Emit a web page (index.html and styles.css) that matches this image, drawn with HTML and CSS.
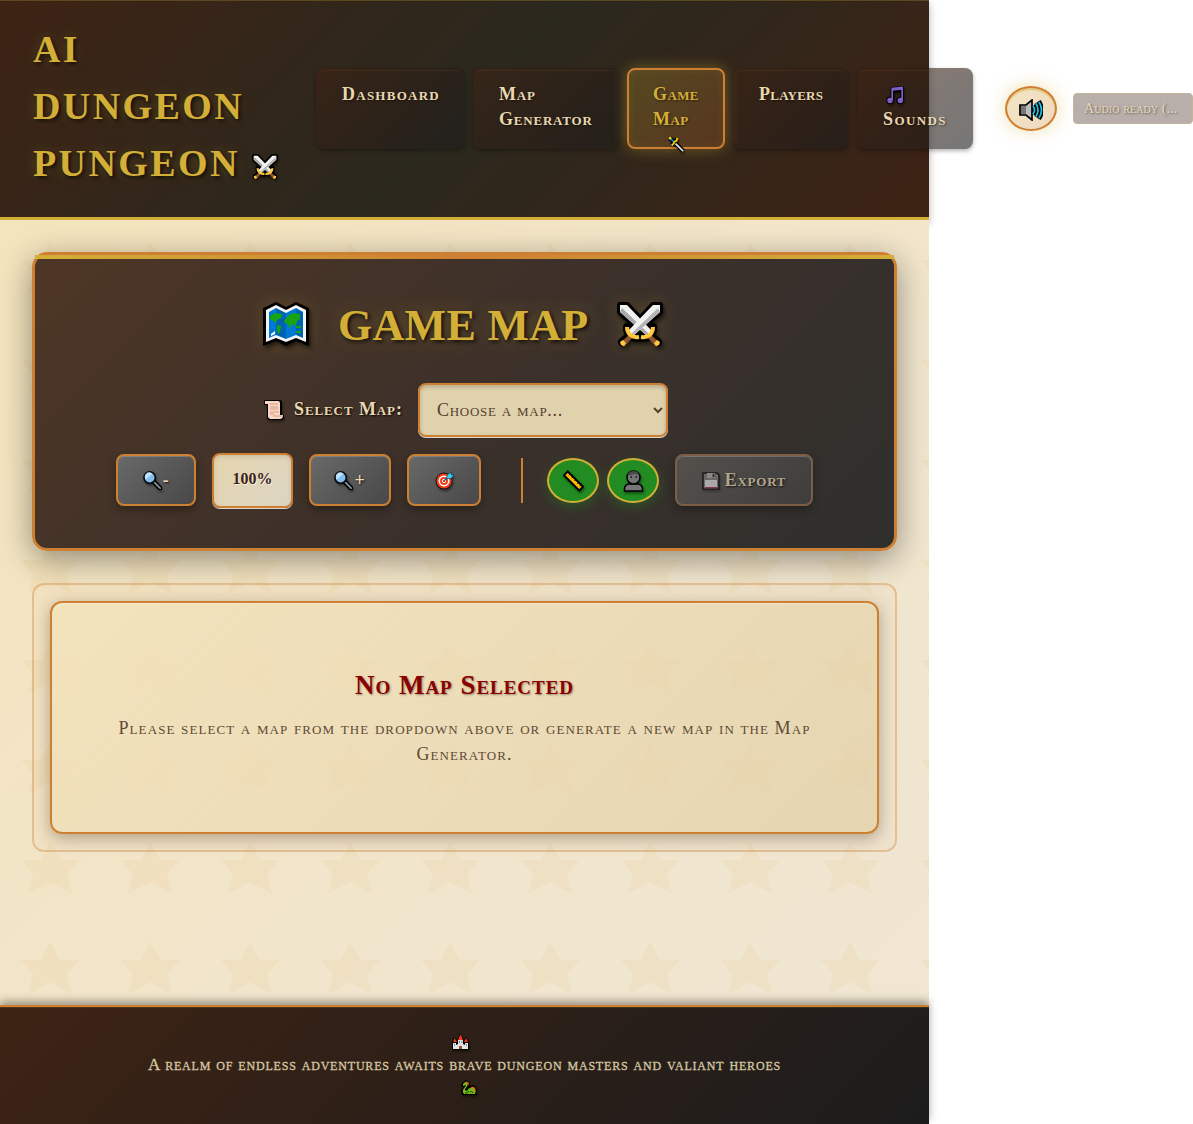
FILE: index.html
```html
<!DOCTYPE html>
<html lang="en">
<head>
<meta charset="utf-8">
<title>AI Dungeon Pungeon</title>
<link rel="stylesheet" href="styles.css">
</head>
<body>
<svg class="sprite" aria-hidden="true">
  <symbol id="swords" viewBox="0 0 46 46">
    <g stroke="#000" stroke-linejoin="round" stroke-width="6"><path d="M3 3h7l26 28-5 5L3 10zM43 3h-7L10 31l5 5 28-26z"/><path d="M10 25c0 8 4 11 11 11M36 25c0 8-4 11-11 11M5 40l8-7M41 40l-8-7" fill="none" stroke-width="8" stroke-linecap="round"/></g>
    <path d="M3 41l10-9 3 3-9 10zM43 41l-10-9-3 3 9 10z" fill="#8e562e"/>
    <path d="M3 3h7l25 26-5 5L3 10z" fill="#f2f2f2"/><path d="M3 10l2-4 27 26-2 2z" fill="#aaa"/>
    <path d="M43 3h-7L11 29l5 5 27-24z" fill="#f2f2f2"/><path d="M43 10l-2-4-27 26 2 2z" fill="#b5b5b5"/>
    <path d="M10 25c0 7 5 11 12 10M36 25c0 7-5 11-12 10" fill="none" stroke="#ffc83d" stroke-width="4"/>
    <path d="M3 40l3-2 3 3-2 3-3-1zM43 40l-3-2-3 3 2 3 3-1z" fill="#ffc83d"/>
  </symbol>
  <symbol id="worldmap" viewBox="0 0 46 46">
    <path d="M0 6L13 0l10 5L33 0l13 6v38l-13-5-10 5-10-5-13 5z"/>
    <path d="M3 8l10-5 10 5 10-5 10 5v32l-10-4-10 4-10-4-10 4z" fill="#f4f4f4"/>
    <path d="M6 10l7-4v27l-7 3zM23 11l10-5v27l-10 4z" fill="#0078d7"/><path d="M13 6l10 5v26l-10-4zM33 6l7 4v26l-7-3z" fill="#0063b1"/>
    <path d="M7 14l5-3 7 1-1 4-4 2-1 3-4-3-2-1zM14 23l4 1-1 6-2 2-1-5zM21 19l3-4 5-4 8 1v5l-3 2-1 5-4-2-2 5-2-5-3-1zM33 24h5v2h-5zM33 29h5v2h-5z" fill="#16a510"/>
    <path d="M8 32l4-3v3l-4 2z" fill="#fff"/>
  </symbol>
  <symbol id="scroll" viewBox="0 0 20 20"><path d="M0 1q0-1 2-1h14q2 0 2 2v13h2v3q-1 2-3 2H6q-3 0-3-3V5H1Q0 5 0 3z"/><path d="M1 1h13q2 0 2 2v12h3q0 4-3 4H7q-3 0-3-3V4H1z" fill="#f9d6c4"/><path d="M6 4h8M6 7h8M6 9h8M6 12h9M6 14h4M9 16h9" stroke="#d59c82"/></symbol>
  <symbol id="lens" viewBox="0 0 20 20"><path d="M11 11l7 7" stroke="#000" stroke-width="5" stroke-linecap="round"/><path d="M12 12l6 6" stroke="#83939a" stroke-width="2" stroke-linecap="round"/><circle cx="7" cy="7" r="6" fill="#83beec" stroke="#0b0b0b" stroke-width="1.8"/><path d="M3 9a4.5 4.5 0 0 1 7-6z" fill="#bfe1ff"/></symbol>
  <symbol id="target" viewBox="0 0 20 20"><circle cx="9.5" cy="10.5" r="9" fill="#111"/><circle cx="9.500" cy="10.500" r="8" fill="#f03a17"/><circle cx="9.500" cy="10.500" r="5" fill="none" stroke="#fff" stroke-width="1.600"/><circle cx="9.500" cy="10.500" r="1.800" fill="none" stroke="#fff"/><path d="M10 10l6-6" stroke="#0063b1" stroke-width="1.500"/><path d="M12 8l1-4 4-3v3h3l-3 4z" fill="#31d2f7" stroke="#123" stroke-width=".6"/></symbol>
  <symbol id="ruler" viewBox="0 0 22 22"><path d="M1 5l4-4 16 16-4 4z" fill="#ffb900" stroke="#000" stroke-width="2"/><path d="M7 4L6 5M10 7L9 8M13 10l-1 1M16 13l-1 1M18.500 15.500L17.500 16.500" stroke="#000"/></symbol>
  <symbol id="person" viewBox="0 0 20 22"><path d="M1 21v-3q1-4 5-4h8q4 0 5 4v3z" fill="#767676" stroke="#000" stroke-width="1.500"/><circle cx="10" cy="7.500" r="6.500" fill="#767676" stroke="#000" stroke-width="1.500"/><path d="M4 6q1-5 6-5 5 0 6 5l-4-2z" fill="#4c4c4c"/><path d="M7 7h1.500M12 7h1.500" stroke="#111" stroke-width="1.500"/></symbol>
  <symbol id="floppy" viewBox="0 0 18 18"><path d="M1 1h14l2 2v14H1z" fill="#777" stroke="#000" stroke-width="1.500"/><path d="M5 1h8v5H5z" fill="#aaa"/><path d="M11 2h1v3h-1z" stroke="#222"/><path d="M3 8h12v8H3z" fill="#ddd"/><path d="M3 15h12v1.500H3z" fill="#a4265c"/></symbol>
  <symbol id="note" viewBox="0 0 18 18"><g stroke="#000" stroke-width="2.500" fill="none"><path d="M6.500 14V3L16 2v12M6.500 5L16 4" stroke-width="4"/><circle cx="4" cy="14.500" r="2.500"/><circle cx="14" cy="14.500" r="2.500"/></g><path d="M6.200 14V2.500L16.200 1.500V14M6.200 4L16.200 3" stroke="#7c60c8" stroke-width="1.700" fill="none"/><g fill="#7c60c8"><circle cx="4" cy="14.500" r="2.700"/><circle cx="14.300" cy="14.500" r="2.700"/></g></symbol>
  <symbol id="speaker" viewBox="0 0 24 22"><path d="M1 6h6l6-5v20l-6-5H1z" fill="#bbb" stroke="#000" stroke-width="1.700"/><path d="M2 7h5v8H2z" fill="#777"/><path d="M14 7q3 4 0 8M17 4q4 7 0 14M20 2q6 9 0 18" fill="none" stroke="#000" stroke-width="4"/><path d="M14 7q3 4 0 8M17 4.500q4 6.500 0 13M20 3q5 8 0 16" fill="none" stroke="#1cc4e8" stroke-width="1.700"/></symbol>
  <symbol id="dagger" viewBox="0 0 18 18"><path d="M2 2l14 14M4 9l6-6" stroke="#000" stroke-width="4.500"/><path d="M8 8l8 8" stroke="#ddd" stroke-width="2"/><path d="M1.500 1.500l2 2" stroke="#ffe000" stroke-width="2.500"/><path d="M3 3l4 4" stroke="#0078d7" stroke-width="2"/><path d="M4 10l2-2 1-2 2-1 1-3" fill="none" stroke="#f5d400" stroke-width="2"/></symbol>
  <symbol id="castle" viewBox="0 0 17 17"><path d="M0 17V9l2-5 3 3 3-7 4 7 2-3 3 5v8z"/><path d="M1 10h3v2l2-1h5l2 1v-2h3v6H1z" fill="#e6e6e6"/><path d="M6 7h5v5H6z" fill="#ddd"/><path d="M1 9l1.500-4L5 9zM6 7l2.500-6L11 7zM12 9l2-4 2 4z" fill="#f03a17"/><path d="M7 13h3v3H7z" fill="#8e562e"/><path d="M7 9h1M9.500 9h1M2 12h1M14 12h1" stroke="#333"/></symbol>
  <symbol id="dragon" viewBox="0 0 16 16"><path d="M1 3l4-3 4 3v3l4-1 3 4-1 6H1L0 10l3-3-3-1z"/><path d="M9 9q1-3 4-2 3 3 1 6z" fill="#f7630c"/><path d="M2 4q3-4 5 0-1 3-3 5 0 2 2 2 2-4 6-3 3 2 2 6H3q-3-3 1-7l1-2-3 1z" fill="#74b818"/><path d="M5 1l3 2-1 3z" fill="#f7630c"/><path d="M4 13q3 1 4-2M9 12q2-2 3 1" stroke="#174a08" fill="none"/></symbol>
</svg>

<div class="page">
  <header class="header">
    <h1 class="brand">AI DUNGEON PUNGEON <svg class="brand-icon"><use href="#swords"/></svg></h1>
    <nav class="nav">
      <a class="nav-item dash">Dashboard</a>
      <a class="nav-item gen">Map Generator</a>
      <a class="nav-item game active">Game Map<svg class="nav-dagger"><use href="#dagger"/></svg></a>
      <a class="nav-item players">Players</a>
      <a class="nav-item sounds"><svg class="nav-note"><use href="#note"/></svg>Sounds</a>
    </nav>
    <div class="audio">
      <button class="audio-button"><svg><use href="#speaker"/></svg></button>
      <div class="audio-status">Audio ready (...</div>
    </div>
  </header>

  <main class="main">
    <section class="panel">
      <h2 class="title"><svg><use href="#worldmap"/></svg><span class="title-text">GAME MAP</span><svg><use href="#swords"/></svg></h2>
      <div class="picker">
        <label class="picker-label" for="map"><svg><use href="#scroll"/></svg>Select Map:</label>
        <select class="picker-select" id="map"><option>Choose a map...</option></select>
      </div>
      <div class="controls">
        <button class="btn zoom-out"><svg><use href="#lens"/></svg><span>-</span></button>
        <output class="zoom-level">100%</output>
        <button class="btn zoom-in"><svg><use href="#lens"/></svg><span>+</span></button>
        <button class="btn reset"><svg><use href="#target"/></svg></button>
        <div class="tools">
          <button class="tool"><svg><use href="#ruler"/></svg></button>
          <button class="tool"><svg><use href="#person"/></svg></button>
        </div>
        <button class="btn export" disabled><svg><use href="#floppy"/></svg><span>Export</span></button>
      </div>
    </section>
    <section class="stage">
      <div class="empty">
        <h3 class="empty-title">No Map Selected</h3>
        <p class="empty-text">Please select a map from the dropdown above or generate a new map in the Map Generator.</p>
      </div>
    </section>
  </main>

  <footer class="footer">
    <svg class="castle"><use href="#castle"/></svg>
    <p class="footer-text">A realm of endless adventures awaits brave dungeon masters and valiant heroes</p>
    <svg class="dragon"><use href="#dragon"/></svg>
  </footer>
</div>
</body>
</html>
```
FILE: styles.css
```css
:root {
  --gold: #d4af37;
  --bronze: #cd7f32;
  --cream: #e9d8b0;
}
* { box-sizing: border-box; }
body { margin: 0; background: #fff; }
.page {
  width: 929px;
  height: 1124px;
  display: flex;
  flex-direction: column;
  font-family: "Liberation Serif", "Times New Roman", serif;
  font-size: 18px;
  font-variant-caps: small-caps;
}
.sprite { position: absolute; width: 0; height: 0; }
svg { flex: none; filter: drop-shadow(1px 2px 1px rgba(0, 0, 0, .4)); }
button, select, output { font: inherit; letter-spacing: inherit; }

.header {
  height: 220px;
  padding: 0 0 0 32px;
  display: flex;
  align-items: center;
  border-bottom: 3px solid var(--gold);
  background: linear-gradient(135deg, #3d2314 0%, #2b281e 50%, #3d2314 100%);
  box-shadow: 0 4px 8px rgba(0, 0, 0, .3), inset 0 1px 0 rgba(212, 175, 55, .25);
}
.brand {
  flex: none;
  width: 256px;
  margin: 0 28px 5px 0;
  padding-left: 1px;
  font-size: 38px;
  line-height: 57px;
  letter-spacing: 2.4px;
  color: var(--gold);
  text-shadow: 2px 2px 4px rgba(0, 0, 0, .8), 0 0 12px rgba(212, 175, 55, .25);
}
.brand-icon { width: 26px; height: 26px; vertical-align: -4px; }
.nav { display: flex; flex: none; gap: 8px; }
.nav-item {
  height: 81px;
  padding: 12px 24px;
  border: 2px solid transparent;
  border-radius: 8px;
  font-weight: bold;
  line-height: 25px;
  letter-spacing: .8px;
  color: var(--cream);
  background: linear-gradient(135deg, rgba(61, 35, 20, .6), rgba(28, 28, 28, .6)) border-box;
  box-shadow: 0 2px 4px rgba(0, 0, 0, .3), inset 0 1px 0 rgba(205, 127, 50, .1);
  text-shadow: 1px 1px 2px rgba(0, 0, 0, .5);
}
.dash { width: 149px; letter-spacing: 1.25px; }
.gen { width: 146px; }
.game { width: 98px; letter-spacing: .4px; }
.players { width: 116px; letter-spacing: .24px; }
.sounds { width: 116px; letter-spacing: 1.4px; }
.active {
  position: relative;
  color: var(--gold);
  border-color: var(--bronze);
  background: linear-gradient(135deg, #554820, #573620);
  box-shadow: 0 0 15px rgba(212, 175, 55, .4), inset 0 0 10px rgba(212, 175, 55, .1);
}
.nav-dagger { position: absolute; left: 39px; top: 66px; width: 17px; height: 17px; }
.nav-note { display: block; width: 18px; height: 18px; margin: 4px 0 3px 3px; }
.audio { display: flex; flex: none; align-items: center; gap: 16px; margin-left: 32px; }
.audio-button {
  width: 52px;
  height: 45px;
  padding: 2px 0 0;
  border: 2px solid var(--bronze);
  border-radius: 50%;
  display: grid;
  place-items: center;
  background: linear-gradient(135deg, #f3e5c4, #efd9c0);
  box-shadow: 0 0 15px rgba(212, 175, 55, .35), 0 0 30px rgba(212, 175, 55, .08), inset 0 2px 1px rgba(212, 175, 55, .5);
}
.audio-button svg { width: 24px; height: 22px; filter: none; }
.audio-status {
  width: 120px;
  height: 31px;
  padding-left: 10px;
  border: 1px solid #c3b49b;
  border-radius: 4px;
  line-height: 29px;
  font-size: 14px;
  letter-spacing: .1px;
  white-space: nowrap;
  color: #e8dabb;
  background: #b9afaa;
  text-shadow: 1px 1px 2px rgba(0, 0, 0, .5);
}

.main {
  flex: 1;
  padding: 32px;
  background: url("data:image/svg+xml,%3Csvg xmlns='http://www.w3.org/2000/svg' width='100' height='100'%3E%3Cpath d='M50 41L60 60H80L67 74L72 94L50 82L28 94L33 74L21 60H41Z' fill='%23dca03c' fill-opacity='.07'/%3E%3C/svg%3E") 0 -220px, linear-gradient(135deg, #f4e4bc, #f1e5cc 60%, #f0e6d2);
}
.panel {
  position: relative;
  height: 299px;
  padding-top: 40px;
  border: 3px solid var(--bronze);
  border-radius: 15px;
  background: linear-gradient(135deg, #4e3625 0%, #3b302a 55%, #2f2f2d 100%);
  box-shadow: 0 8px 32px rgba(0, 0, 0, .4);
}
.panel::before {
  content: "";
  position: absolute;
  inset: 0 0 auto;
  height: 4px;
  background: linear-gradient(90deg, var(--gold), var(--bronze), var(--gold));
}
.title {
  height: 60px;
  margin: 0;
  padding-right: 3px;
  display: flex;
  align-items: center;
  justify-content: center;
  font-size: 44px;
  letter-spacing: .3px;
  color: var(--gold);
  text-shadow: 2px 2px 4px rgba(0, 0, 0, .8), 0 0 20px rgba(212, 175, 55, .3);
}
.title svg { width: 46px; height: 46px; filter: drop-shadow(2px 3px 2px rgba(0, 0, 0, .6)) drop-shadow(0 0 8px rgba(212, 175, 55, .2)); }
.title-text { width: 250px; margin: 0 29px; white-space: nowrap; }
.picker { height: 55px; margin-top: 27px; padding-left: 3px; display: flex; justify-content: center; align-items: center; }
.picker-label {
  width: 154px;
  display: flex;
  align-items: center;
  gap: 10px;
  font-weight: bold;
  letter-spacing: .9px;
  white-space: nowrap;
  color: var(--cream);
  text-shadow: 1px 1px 2px #000;
}
.picker-label svg { width: 20px; height: 20px; }
.picker-select {
  width: 250px;
  height: 54px;
  padding: 0 0 0 13px;
  border: 2px solid var(--bronze);
  border-radius: 8px;
  letter-spacing: .7px;
  color: #54402b;
  background: #e1d2ae;
  box-shadow: inset 0 2px 4px rgba(0, 0, 0, .2), 0 1px 0 rgba(255, 255, 255, .8);
}
.controls { height: 55px; margin-top: 16px; display: flex; justify-content: center; align-items: center; gap: 16px; }
.btn {
  height: 52px;
  margin-bottom: 2px;
  padding: 2px 0 0;
  border: 2px solid var(--bronze);
  border-radius: 8px;
  display: flex;
  align-items: center;
  justify-content: center;
  gap: 1px;
  font-weight: bold;
  letter-spacing: .75px;
  color: var(--cream);
  background: linear-gradient(135deg, #696969, #484848);
  box-shadow: 0 4px 8px rgba(0, 0, 0, .3), inset 0 1px 0 rgba(255, 255, 255, .2);
  text-shadow: 1px 1px 2px rgba(0, 0, 0, .8);
}
.btn svg { width: 19px; height: 19px; }
.zoom-out { width: 80px; }
.zoom-in { width: 82px; }
.reset { width: 74px; }
.export { width: 138px; gap: 5px; color: #b3a78f; border-color: #7b5e45; background: linear-gradient(135deg, #55514d, #3e3d3c); }
.export svg { width: 18px; height: 18px; opacity: .65; }
.zoom-level {
  width: 81px;
  height: 55px;
  border: 2px solid var(--bronze);
  border-radius: 8px;
  line-height: 48px;
  text-align: center;
  font-size: 16px;
  font-weight: bold;
  color: #3d2314;
  background: linear-gradient(135deg, #e5d5ae, #dcd5c3);
  box-shadow: inset 0 2px 4px rgba(0, 0, 0, .1), 0 1px 0 rgba(255, 255, 255, .8);
  text-shadow: 1px 1px 0 rgba(255, 255, 255, .6);
}
.tools { height: 45px; margin-left: 24px; padding-left: 24px; border-left: 2px solid var(--bronze); display: flex; gap: 8px; }
.tool {
  width: 52px;
  height: 45px;
  padding: 0;
  border: 2px solid var(--gold);
  border-radius: 50%;
  display: grid;
  place-items: center;
  background: #228b22;
  box-shadow: 0 4px 12px rgba(34, 139, 34, .4);
}
.tool svg { width: 21px; height: 22px; }

.stage { height: 269px; margin-top: 32px; padding: 16px; border: 2px solid rgba(205, 127, 50, .35); border-radius: 12px; background: rgba(205, 127, 50, .02); }
.empty {
  height: 233px;
  padding: 66px 48px 0;
  border: 2px solid var(--bronze);
  border-radius: 12px;
  text-align: center;
  background: linear-gradient(135deg, rgba(244, 228, 188, .75), rgba(226, 209, 168, .75));
  box-shadow: 0 4px 16px rgba(61, 35, 20, .35), inset 0 1px 0 rgba(255, 255, 255, .3);
}
.empty-title { margin: 0; font-size: 27px; line-height: 32px; letter-spacing: .97px; color: #8b0000; text-shadow: 1px 1px 2px rgba(0, 0, 0, .4); }
.empty-text { margin: 14px 0 0; line-height: 26px; letter-spacing: 1.09px; color: #5e4a35; }

.footer {
  height: 119px;
  padding-top: 26px;
  border-top: 2px solid var(--bronze);
  display: flex;
  flex-direction: column;
  align-items: center;
  color: #d7c7a2;
  background: linear-gradient(135deg, #3d2314, #1c1c1c);
  box-shadow: 0 -4px 8px rgba(0, 0, 0, .35), inset 0 1px 0 rgba(212, 175, 55, .15);
}
.castle { width: 17px; height: 17px; margin-right: 9px; }
.dragon { width: 16px; height: 16px; margin-left: 8px; }
.footer-text { margin: 2px 0 3px; font-size: 17px; line-height: 25px; letter-spacing: .81px; white-space: nowrap; -webkit-text-stroke: .3px; }
```
